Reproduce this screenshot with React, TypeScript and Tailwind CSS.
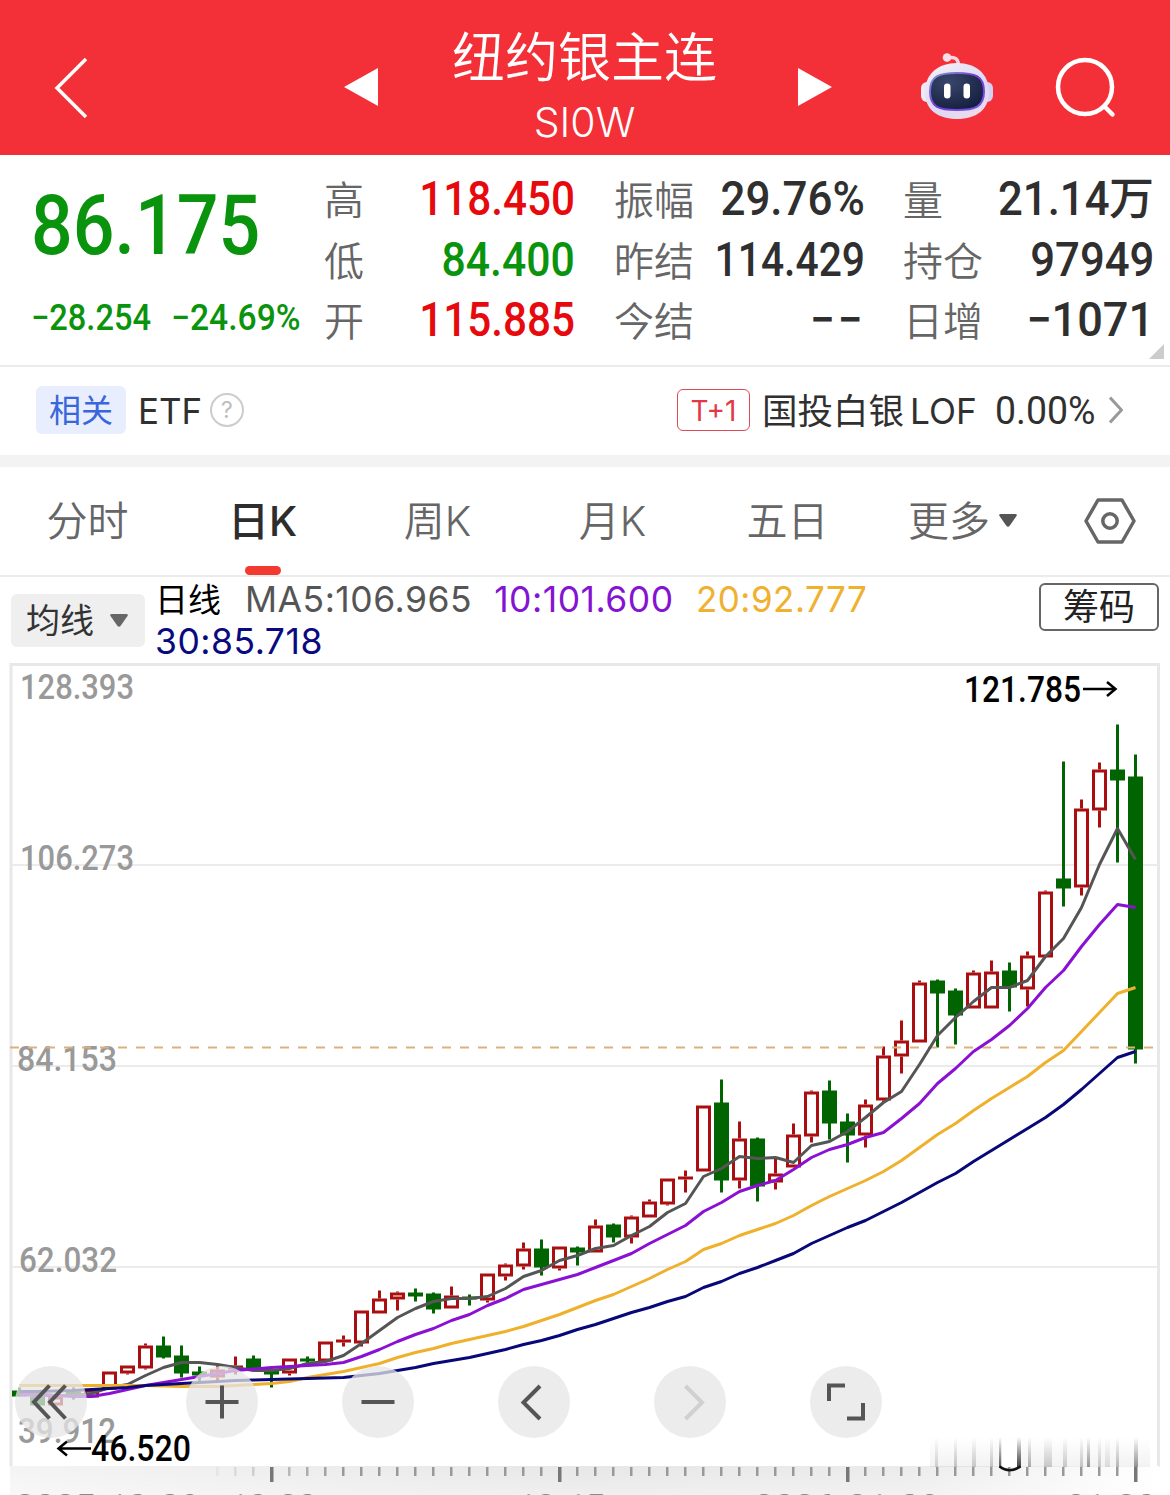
import * as React from "react";
import { clsx } from "clsx";

/* ─── Data ──────────────────────────────────────────── */
type Quote = { label: string; value: string; className: string; suffix?: string };

const QUOTES: { className: string; items: Quote[] }[] = [
  {
    className: "ml-[324px] w-[251px] text-[#e60a0f]",
    items: [
      { label: "高", value: "118.450", className: "scale-x-[.88]" },
      { label: "低", value: "84.400", className: "scale-x-[.89] text-[#0a930c]" },
      { label: "开", value: "115.885", className: "scale-x-[.88]" },
    ],
  },
  {
    className: "ml-[39px] w-[251px] text-[#2f2f2f]",
    items: [
      { label: "振幅", value: "29.76%", className: "scale-x-[.915]" },
      { label: "昨结", value: "114.429", className: "scale-x-[.85]" },
      { label: "今结", value: "−−", className: "scale-x-[.92] tracking-[3px]" },
    ],
  },
  {
    className: "ml-[38px] w-[251px] text-[#2f2f2f]",
    items: [
      { label: "量", value: "21.14", className: "scale-x-[.91]", suffix: "万" },
      { label: "持仓", value: "97949", className: "scale-x-[.91]" },
      { label: "日增", value: "−1071", className: "scale-x-[.94]" },
    ],
  },
];

const TABS = ["分时", "日K", "周K", "月K", "五日"];

// One row per day, oldest first: [up, high, body top, body bottom, low]
const CANDLES: [number, number, number, number, number][] = [
  [0, 1387, 1390, 1396, 1396],
  [0, 1396, 1396, 1405, 1405],
  [1, 1396, 1396, 1405, 1405],
  [0, 1387, 1391, 1394, 1399],
  [1, 1388, 1389, 1397, 1397],
  [1, 1371, 1371, 1389, 1389],
  [1, 1365, 1365, 1373, 1374],
  [1, 1343, 1345, 1368, 1369],
  [0, 1336, 1345, 1357, 1358],
  [0, 1345, 1355, 1373, 1377],
  [0, 1366, 1371, 1375, 1382],
  [1, 1365, 1369, 1377, 1381],
  [1, 1356, 1365, 1369, 1374],
  [0, 1355, 1358, 1368, 1368],
  [0, 1368, 1369, 1374, 1387],
  [1, 1358, 1358, 1373, 1375],
  [0, 1356, 1358, 1361, 1366],
  [1, 1341, 1341, 1361, 1361],
  [1, 1335, 1339, 1342, 1346],
  [1, 1310, 1310, 1343, 1346],
  [1, 1290, 1298, 1313, 1313],
  [1, 1291, 1292, 1299, 1310],
  [0, 1288, 1292, 1296, 1301],
  [0, 1292, 1293, 1309, 1313],
  [1, 1286, 1295, 1308, 1308],
  [0, 1294, 1296, 1299, 1305],
  [1, 1273, 1273, 1300, 1302],
  [1, 1263, 1264, 1276, 1280],
  [1, 1242, 1248, 1266, 1269],
  [0, 1239, 1248, 1267, 1275],
  [1, 1246, 1246, 1268, 1270],
  [0, 1246, 1247, 1252, 1265],
  [1, 1219, 1225, 1252, 1252],
  [0, 1223, 1224, 1237, 1242],
  [1, 1215, 1216, 1237, 1243],
  [1, 1199, 1201, 1217, 1217],
  [1, 1178, 1178, 1204, 1205],
  [1, 1170, 1176, 1179, 1192],
  [1, 1105, 1105, 1171, 1171],
  [0, 1079, 1102, 1180, 1192],
  [1, 1121, 1138, 1180, 1188],
  [0, 1137, 1138, 1186, 1201],
  [1, 1157, 1173, 1182, 1189],
  [1, 1123, 1134, 1167, 1167],
  [1, 1090, 1091, 1136, 1142],
  [0, 1080, 1090, 1123, 1139],
  [0, 1113, 1121, 1135, 1162],
  [1, 1099, 1104, 1135, 1147],
  [1, 1046, 1055, 1100, 1102],
  [1, 1020, 1040, 1056, 1073],
  [1, 980, 982, 1042, 1042],
  [0, 979, 980, 993, 1047],
  [0, 988, 990, 1015, 1044],
  [1, 970, 972, 1008, 1008],
  [1, 960, 971, 1008, 1008],
  [0, 962, 970, 987, 1011],
  [1, 951, 955, 989, 1006],
  [1, 890, 891, 957, 957],
  [0, 761, 878, 888, 906],
  [1, 799, 808, 887, 895],
  [1, 762, 769, 810, 827],
  [0, 724, 769, 780, 862],
  [0, 754, 776, 1049, 1063],
];

const MA5 = [
  1392, 1393, 1395, 1395, 1393, 1387, 1384, 1375, 1367, 1362, 1362, 1364, 1367, 1370, 1370, 1368, 1363,
  1361, 1355, 1343, 1330, 1317, 1308, 1301, 1298, 1298, 1296, 1288, 1276, 1270, 1260, 1255, 1248, 1245,
  1235, 1226, 1212, 1203, 1176, 1168, 1156, 1158, 1157, 1162, 1145, 1141, 1131, 1117, 1102, 1091, 1064,
  1035, 1017, 1001, 987, 987, 980, 956, 938, 907, 864, 828, 859,
];

const MA10 = [
  1394, 1395, 1395, 1396, 1396, 1393, 1389, 1385, 1382, 1379, 1376, 1373, 1370, 1368.5, 1367, 1366, 1365,
  1364, 1362, 1356, 1349, 1341, 1334, 1328, 1320, 1314, 1305, 1298, 1289, 1284, 1279, 1274, 1267, 1260,
  1253, 1243, 1234, 1225, 1211, 1202, 1191, 1185, 1180, 1169, 1157, 1149, 1144, 1137, 1132, 1118, 1103,
  1083, 1068, 1051, 1039, 1025, 1008, 987, 970, 946, 924, 904, 907,
];

const MA20 = [
  1385, 1385, 1385, 1385, 1385, 1385, 1385, 1385, 1385.5, 1386, 1386, 1386, 1385, 1384, 1383, 1381, 1377,
  1374, 1371, 1367, 1363, 1357, 1352, 1348, 1343, 1339, 1335, 1331, 1326, 1320, 1314, 1307, 1300, 1294,
  1286, 1278, 1269, 1261, 1249, 1243, 1235, 1229, 1223, 1215, 1205, 1196, 1188, 1180, 1171, 1160, 1147,
  1134, 1123, 1110, 1098, 1087, 1076, 1062, 1050, 1031, 1012, 993, 987,
];

const MA30 = [
  1391, 1391, 1390.5, 1390, 1389, 1388, 1387, 1385, 1384, 1383, 1382, 1381, 1380, 1379.5, 1379, 1378.5,
  1378, 1377.5, 1377, 1375, 1373, 1370, 1367, 1363, 1360, 1357, 1353, 1349, 1344, 1340, 1335, 1329, 1324,
  1318, 1312, 1307, 1301, 1296, 1287, 1281, 1273, 1267, 1260, 1253, 1243, 1235, 1227, 1220, 1211, 1202,
  1192, 1182, 1173, 1161, 1150, 1139, 1128, 1117, 1104, 1089, 1073, 1057, 1051,
];

const STEP = 18;
const X0 = 19;
const cx = (i: number) => X0 + i * STEP;
const toPoints = (ys: number[]) => ys.map((y, i) => `${cx(i) + 0.5},${y + 0.5}`).join(" ");

/* ─── Header ────────────────────────────────────────── */
function Robot() {
  return (
    <svg className="h-[70px] w-[74px] shrink-0" viewBox="0 0 74 70" fill="none">
      <defs>
        <linearGradient id="shell" x1="0.2" y1="0" x2="0.8" y2="1">
          <stop offset="0" stopColor="#f6eef6" />
          <stop offset="0.55" stopColor="#d9daf6" />
          <stop offset="1" stopColor="#f0d9ea" />
        </linearGradient>
        <linearGradient id="rim" x1="0" y1="0" x2="1" y2="1">
          <stop offset="0" stopColor="#7fa0cc" />
          <stop offset="0.5" stopColor="#7a35d6" />
          <stop offset="1" stopColor="#6b5fe0" />
        </linearGradient>
        <radialGradient id="visor" cx="0.35" cy="0.25" r="0.8">
          <stop offset="0" stopColor="#39466b" />
          <stop offset="1" stopColor="#141e40" />
        </radialGradient>
      </defs>
      <path d="M28 6c7-2 10.500 1 10.500 8" stroke="#f3d5de" strokeWidth="3.500" />
      <circle cx="27" cy="5.500" r="4.300" fill="#f6dfe6" />
      <rect x="1" y="30" width="14" height="20" rx="6" fill="#f0e8f5" />
      <rect x="59" y="30" width="14" height="20" rx="6" fill="#d3d0f3" />
      <path d="M37 11c19 0 32 11 32 29S56 67 37 67 5 58 5 40s13-29 32-29z" fill="url(#shell)" />
      <path
        d="M37 21c18 0 27 3 27 18.500S55 58 37 58s-27-3-27-18.500S19 21 37 21z"
        fill="url(#visor)"
        stroke="url(#rim)"
        strokeWidth="2"
      />
      <rect x="24" y="31.500" width="6.500" height="15" rx="3.250" fill="#fff" />
      <rect x="43.500" y="31.500" width="6.500" height="15" rx="3.250" fill="#fff" />
    </svg>
  );
}

function Header() {
  return (
    <header className="flex h-[155px] items-start bg-[#f33037] pl-[54px] text-white">
      <svg className="mt-[57px] h-[62px] w-[34px] shrink-0" viewBox="0 0 34 62" fill="none">
        <path d="M32 2L3 31l29 29" stroke="currentColor" strokeWidth="3.500" />
      </svg>
      <svg className="mt-[68px] ml-[256px] h-[38px] w-[34px] shrink-0" viewBox="0 0 34 38">
        <path d="M34 0v38L0 19z" fill="currentColor" />
      </svg>
      <div className="flex w-[420px] flex-col items-center pt-[25px] pr-[7px]">
        <h1 className="text-[53px] leading-[66px] font-[350] whitespace-nowrap">纽约银主连</h1>
        <p className="mt-[7px] text-[41px] leading-[48px] font-[350]">SI0W</p>
      </div>
      <svg className="mt-[68px] h-[38px] w-[34px] shrink-0" viewBox="0 0 34 38">
        <path d="M0 0v38l34-19z" fill="currentColor" />
      </svg>
      <div className="mt-[52px] ml-[88px]">
        <Robot />
      </div>
      <svg className="mt-[57px] ml-[61px] h-[62px] w-[62px] shrink-0" viewBox="0 0 62 62" fill="none">
        <circle cx="30" cy="30" r="27" stroke="currentColor" strokeWidth="4.500" />
        <path d="M49.500 49.500l8 8" stroke="currentColor" strokeWidth="4.500" strokeLinecap="round" />
      </svg>
    </header>
  );
}

/* ─── Quote panel ───────────────────────────────────── */
function QuotePanel() {
  return (
    <section className="relative flex h-[212px] border-b-2 border-[#ebebeb] pt-[14px]">
      <div className="absolute top-[29px] left-[31px] font-[Roboto] font-medium whitespace-nowrap text-[#0a930c]">
        <div className="origin-left scale-x-[.875] text-[84px] leading-[84px]">86.175</div>
        <div className="mt-[28px] flex text-[36px] leading-[44px]">
          <span className="w-[140px] origin-left scale-x-[.905]">−28.254</span>
          <span className="origin-left scale-x-[.935]">−24.69%</span>
        </div>
      </div>
      {QUOTES.map((col, i) => (
        <dl key={i} className={clsx("shrink-0", col.className)}>
          {col.items.map((q) => (
            <div key={q.label} className="flex h-[60.500px] items-center justify-between whitespace-nowrap">
              <dt className="pt-[4px] text-[40px] leading-[60px] font-[350] text-[#666]">{q.label}</dt>
              <dd className="-ml-10 flex items-center font-medium">
                <span
                  className={clsx("origin-right font-[Roboto] text-[48px] leading-[60px]", q.className)}
                >
                  {q.value}
                </span>
                {q.suffix && <span className="text-[45px] leading-[60px]">{q.suffix}</span>}
              </dd>
            </div>
          ))}
        </dl>
      ))}
      <svg className="absolute right-[6px] bottom-[6px] h-[15px] w-[15px]" viewBox="0 0 15 15">
        <path d="M15 0v15H0z" fill="#ccc" />
      </svg>
    </section>
  );
}

/* ─── Related fund row ──────────────────────────────── */
function RelatedRow() {
  return (
    <section className="flex h-[88px] items-center pr-[47px] pb-[2px] pl-[36px] text-[36px] text-[#303030]">
      <span className="flex h-[48px] w-[90px] items-center justify-center rounded-md bg-[#e8eefd] pt-[2px] text-[32px] text-[#3a66dc]">
        相关
      </span>
      <span className="ml-[12px] w-[62px] origin-left scale-x-[.97] pt-[2px]">ETF</span>
      <span className="ml-[10px] flex h-[34px] w-[34px] items-center justify-center rounded-full border-[2.500px] border-[#ccc] text-[23px] text-[#bdbdbd]">
        ?
      </span>
      <span className="ml-auto flex h-[42px] w-[73px] items-center justify-center rounded-[6px] border-[1.500px] border-[#dc4a56] pt-[2px] text-[28px] text-[#e03a48]">
        T+1
      </span>
      <span className="ml-[12px] w-[148px] pt-[4px] text-[35.500px] whitespace-nowrap">国投白银</span>
      <span className="w-[66px] origin-left scale-x-[.98] pt-[2px]">LOF</span>
      <span className="ml-[19px] w-[101px] origin-left scale-x-[.96] pt-[2px] font-[Roboto] text-[39px]">
        0.00%
      </span>
      <svg className="ml-[13px] h-[28px] w-[14px]" viewBox="0 0 14 28" fill="none">
        <path d="M1 1.500L12.500 14 1 26.500" stroke="#999" strokeWidth="3" />
      </svg>
    </section>
  );
}

/* ─── Period tabs ───────────────────────────────────── */
function Tabs() {
  return (
    <nav className="box-content flex h-[108px] border-t-[12px] border-b-2 border-t-[#f3f3f3] border-b-[#ebebeb] text-[41px] font-[350] text-[#666]">
      {TABS.map((tab) => {
        const active = tab === "日K";
        return (
          <div
            key={tab}
            className={clsx(
              "relative flex w-[175px] items-center justify-center pt-[2px]",
              active && "font-medium text-[#2d2d2d]"
            )}
          >
            {tab}
            {active && (
              <span className="absolute bottom-0 h-[9px] w-[36px] rounded-full bg-[#f23a30]" />
            )}
          </div>
        );
      })}
      <div className="flex w-[175px] items-center justify-center gap-[9px] pt-[2px]">
        更多
        <svg className="mb-[3px] h-[13px] w-[18px]" viewBox="0 0 18 13">
          <path d="M1.500 0h15q2 0 1 2L10.500 12q-1.500 1.500-3 0L.5 2Q-.5 0 1.500 0z" fill="#555" />
        </svg>
      </div>
      <div className="flex w-[120px] items-center justify-center">
        <svg className="h-[46px] w-[52px]" viewBox="0 0 52 46" fill="none" stroke="#666" strokeWidth="3.500">
          <path d="M14 2h24l12 21-12 21H14L2 23z" strokeLinejoin="round" />
          <circle cx="26" cy="23" r="7.200" />
        </svg>
      </div>
    </nav>
  );
}

/* ─── Moving average legend ─────────────────────────── */
function Legend() {
  return (
    <section className="flex h-[85px] items-start pr-[11px] pl-[11px]">
      <button className="mt-[17px] flex h-[53px] w-[134px] shrink-0 items-center rounded-md bg-[#efefef] pl-[15px] text-[34px] text-[#333]">
        均线
        <svg className="ml-[16px] h-[13px] w-[18px]" viewBox="0 0 18 13">
          <path d="M1.500 0h15q2 0 1 2L10.500 12q-1.500 1.500-3 0L.5 2Q-.5 0 1.500 0z" fill="#666" />
        </svg>
      </button>
      <div className="ml-[10px] flex w-[770px] flex-wrap gap-x-[22px] pt-[2px] text-[35.500px] leading-[42px] tracking-[.5px]">
        <span className="w-[68px] text-[33px] tracking-normal text-black">日线</span>
        <span className="text-[#555]">MA5:106.965</span>
        <span className="text-[#8414d2]">10:101.600</span>
        <span className="w-[200px] origin-left scale-x-[.985] text-[#f0b030]">20:92.777</span>
        <span className="text-[#0a0a80]">30:85.718</span>
      </div>
      <button className="mt-[6px] ml-auto h-[48px] w-[120px] shrink-0 rounded-[6px] border-2 border-[#666] text-[36px] leading-[42px] text-[#222]">
        筹码
      </button>
    </section>
  );
}

/* ─── Chart ─────────────────────────────────────────── */
const GRID = [865, 1066, 1267];

const AXIS_LABELS = [
  { y: 699, text: "128.393", width: 114, x: 20 },
  { y: 870, text: "106.273", width: 114, x: 20 },
  { y: 1071, text: "84.153", width: 100, x: 17 },
  { y: 1272, text: "62.032", width: 98, x: 19 },
  { y: 1443, text: "39.912", width: 98, x: 18 },
];

const DATES = [
  { x: 15, width: 185, text: "2025-10-09" },
  { x: 229, width: 88, text: "10-30" },
  { x: 517, width: 88, text: "12-15" },
  { x: 754, width: 186, text: "2026-01-09" },
  { x: 1066, width: 90, text: "01-30" },
];

// Shadow bars standing on the right end of the ruler: [x, width, opacity]
const SMEARS = [
  [935, 3, 0.15], [954, 3, 0.2], [972, 4, 0.18], [990, 3, 0.2], [999, 2.5, 0.65], [1017, 4, 0.75],
  [1028, 3, 0.3], [1044, 8, 0.18], [1063, 4, 0.18], [1080, 3, 0.2], [1087, 3, 0.4], [1098, 3, 0.18],
  [1105, 5, 0.1], [1116, 3, 0.25], [1134, 4, 0.4], [930, 220, 0.05],
];

function Candle({ i }: { i: number }) {
  const [up, high, top, bottom, low] = CANDLES[i];
  const x = cx(i);
  if (!up) {
    return (
      <g fill="#006500">
        <rect x={x - 1} y={high} width="3" height={low - high} />
        <rect x={x - 7} y={top} width="15" height={bottom - top} />
      </g>
    );
  }
  return (
    <g fill="#ab0e10">
      <rect x={x - 1} y={high} width="3" height={top - high} />
      <rect x={x - 1} y={bottom} width="3" height={low - bottom} />
      {bottom - top > 4 ? (
        <rect
          x={x - 5.500}
          y={top + 1.500}
          width="12"
          height={bottom - top - 3}
          fill="#fff"
          stroke="#ab0e10"
          strokeWidth="3"
        />
      ) : (
        <rect x={x - 7} y={top} width="15" height={bottom - top} />
      )}
    </g>
  );
}

function Chart() {
  return (
    <svg className="block h-[833px] w-[1170px]" viewBox="0 662 1170 833" fill="none">
      <defs>
        <linearGradient id="ruler" x1="0" y1="0" x2="1" y2="0">
          <stop offset="0" stopColor="#f4f4f4" />
          <stop offset="0.25" stopColor="#ededed" />
          <stop offset="0.5" stopColor="#e7e7e7" />
          <stop offset="0.78" stopColor="#ebebeb" />
          <stop offset="1" stopColor="#fff" />
        </linearGradient>
        <linearGradient id="rulerFade" x1="0" y1="0" x2="0" y2="1">
          <stop offset="0" stopColor="#fff" stopOpacity="0" />
          <stop offset="1" stopColor="#fff" stopOpacity="0.35" />
        </linearGradient>
        <linearGradient id="smear" x1="0" y1="0" x2="0" y2="1">
          <stop offset="0" stopColor="#000" stopOpacity="0" />
          <stop offset="1" stopColor="#000" />
        </linearGradient>
        <linearGradient id="tickFade" gradientUnits="userSpaceOnUse" x1="200" y1="0" x2="340" y2="0">
          <stop offset="0" stopColor="#999" stopOpacity="0" />
          <stop offset="1" stopColor="#999" />
        </linearGradient>
      </defs>

      {/* Frame and grid */}
      <path d="M11 1467V664.500H1158.500V1467" stroke="#e8e8e8" strokeWidth="3" />
      {GRID.map((y) => (
        <rect key={y} x="12" y={y - 1} width="1146" height="2" fill="#ebebeb" />
      ))}
      <g fontFamily="Roboto" fontWeight="500" fontSize="35" fill="#999">
        {AXIS_LABELS.map((l) => (
          <text key={l.text} x={l.x} y={l.y} textLength={l.width} lengthAdjust="spacingAndGlyphs">
            {l.text}
          </text>
        ))}
      </g>

      <g transform="translate(0 0.5)">
        {CANDLES.map((_, i) => (
          <Candle key={i} i={i} />
        ))}
      </g>

      <path d="M10 1047.500H1156" stroke="#dcb27c" strokeWidth="2" strokeDasharray="9 9" />
      <g strokeWidth="3" strokeLinejoin="round">
        <polyline points={toPoints(MA5)} stroke="#555" />
        <polyline points={toPoints(MA10)} stroke="#8a10d4" />
        <polyline points={toPoints(MA20)} stroke="#efb02c" />
        <polyline points={toPoints(MA30)} stroke="#080878" />
      </g>

      {/* High and low marks */}
      <g fontFamily="Roboto" fontWeight="500" fontSize="36" fill="#000">
        <text x="964" y="702" textLength="117" lengthAdjust="spacingAndGlyphs">
          121.785
        </text>
        <text x="91" y="1461" textLength="100" lengthAdjust="spacingAndGlyphs">
          46.520
        </text>
      </g>
      <path
        d="M1083 689h32M1107 682l8.500 7-8.500 7M91 1448.500H59M67 1441.500l-8.500 7 8.500 7"
        stroke="#000"
        strokeWidth="2.500"
      />

      {/* Time ruler */}
      <rect x="10" y="1466" width="1149" height="29" fill="url(#ruler)" />
      <rect x="10" y="1466" width="1149" height="29" fill="url(#rulerFade)" />
      {SMEARS.map(([x, w, o]) => (
        <rect key={x} x={x} y="1437" width={w} height="30" fill="url(#smear)" opacity={o} />
      ))}
      <rect x="1001.500" y="1440" width="15.500" height="27" fill="#fff" />
      {CANDLES.map((_, i) => {
        const major = [14, 30, 46, 62].includes(i);
        if (i < 11) return null;
        return (
          <rect
            key={i}
            x={cx(i) - 1}
            y="1467"
            width={major ? 3.5 : 2.5}
            height={major ? 15 : 9}
            fill={major ? "#777" : i < 18 ? "url(#tickFade)" : "#999"}
          />
        );
      })}
      <path d="M999.500 1466.500q10 7.500 21 0" stroke="#111" strokeWidth="2.500" />
      <g fontFamily="Roboto" fontWeight="500" fontSize="34" fill="#8a8a8a">
        {DATES.map((d) => (
          <text key={d.x} x={d.x} y="1518" textLength={d.width} lengthAdjust="spacingAndGlyphs">
            {d.text}
          </text>
        ))}
      </g>
    </svg>
  );
}

/* ─── Floating chart controls ───────────────────────── */
const CONTROLS = [
  { name: "fast-back", d: "M34.500 19.500L19 36l15.500 16.500M50.500 19.500L35 36l15.500 16.500", className: "stroke-[#555]" },
  { name: "zoom-in", d: "M19.500 36h33M36 19.500v33", className: "stroke-[#555]" },
  { name: "zoom-out", d: "M19.500 36h33", className: "stroke-[#555]" },
  { name: "back", d: "M42 20L25.500 36.500 42 53", className: "stroke-[#555]" },
  { name: "forward", d: "M31.500 20L48 36.500 31.500 53", className: "stroke-[#d0d0d0]" },
  { name: "fullscreen", d: "M35 19.500H19V35M37 52.500h16V37", className: "stroke-[#555]" },
];

function Controls() {
  return (
    <div className="absolute top-[704px] left-[15px] flex">
      {CONTROLS.map((c, i) => (
        <button
          key={c.name}
          className={clsx(
            "h-[72px] w-[72px] rounded-full bg-[#e6e6e6]/75",
            i === 1 && "ml-[99px]",
            i > 1 && "ml-[84px]"
          )}
        >
          <svg className="h-[72px] w-[72px]" viewBox="0 0 72 72" fill="none" strokeWidth="4">
            <path d={c.d} className={c.className} />
          </svg>
        </button>
      ))}
    </div>
  );
}

export default function App() {
  return (
    <main className="h-[1495px] w-[1170px] overflow-hidden bg-white font-[Inter,'Noto_Sans_CJK_SC',sans-serif]">
      <Header />
      <QuotePanel />
      <RelatedRow />
      <Tabs />
      <Legend />
      <div className="relative">
        <Chart />
        <Controls />
      </div>
    </main>
  );
}
